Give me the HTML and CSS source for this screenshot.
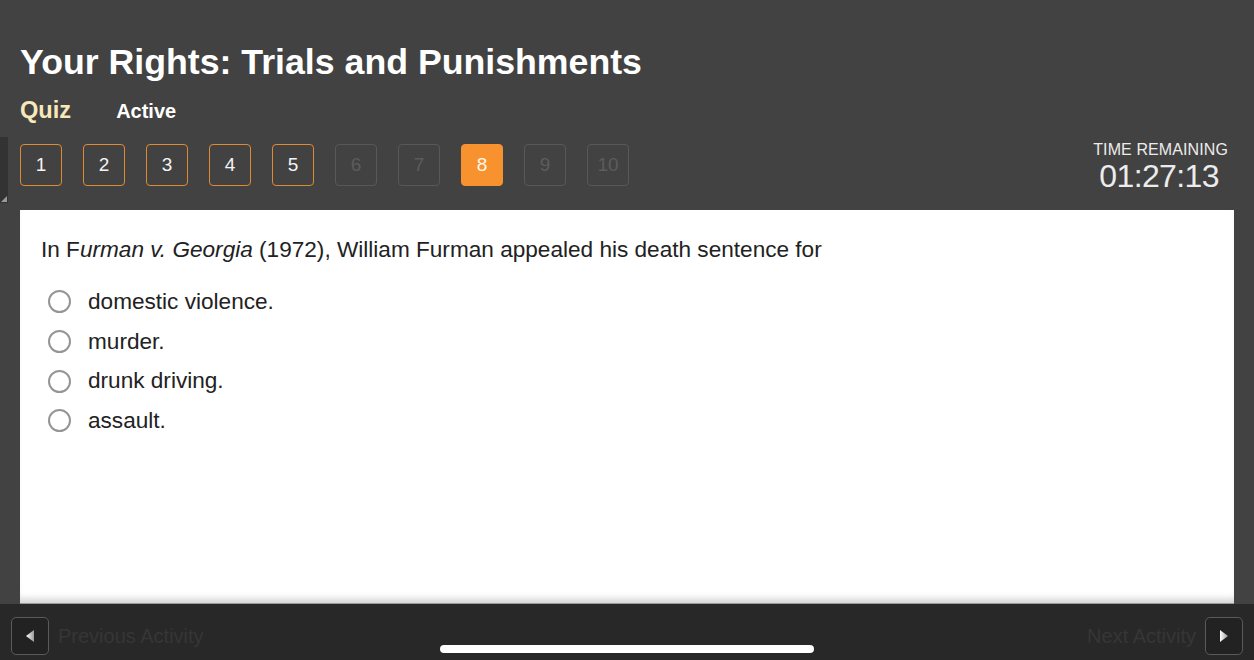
FILE: index.html
```html
<!DOCTYPE html>
<html lang="en">
<head>
<meta charset="utf-8">
<title>Your Rights: Trials and Punishments</title>
<link rel="stylesheet" href="styles.css">
</head>
<body>
<div class="app">
  <header class="header">
    <h1 class="title">Your Rights: Trials and Punishments</h1>
    <div class="subrow">
      <span class="quiz">Quiz</span>
      <span class="status">Active</span>
    </div>
    <div class="navrow">
      <div class="qnums">
        <span class="qn done">1</span>
        <span class="qn done">2</span>
        <span class="qn done">3</span>
        <span class="qn done">4</span>
        <span class="qn done">5</span>
        <span class="qn off">6</span>
        <span class="qn off">7</span>
        <span class="qn cur">8</span>
        <span class="qn off">9</span>
        <span class="qn off">10</span>
      </div>
      <div class="timer">
        <div class="tlabel">TIME REMAINING</div>
        <div class="tval">01:27:13</div>
      </div>
    </div>
    <div class="sidetab"><span class="grip"></span></div>
  </header>
  <main class="panel">
    <p class="question">In F<em>urman v. Georgia</em> (1972), William Furman appealed his death sentence for</p>
    <ul class="options">
      <li class="opt"><span class="radio"></span><span>domestic violence.</span></li>
      <li class="opt"><span class="radio"></span><span>murder.</span></li>
      <li class="opt"><span class="radio"></span><span>drunk driving.</span></li>
      <li class="opt"><span class="radio"></span><span>assault.</span></li>
    </ul>
  </main>
  <footer class="footer">
    <div class="navbtn">
      <span class="arrowbox"><svg width="12" height="14" viewBox="0 0 12 14"><defs><linearGradient id="g1" x1="0" y1="0" x2="1" y2="0"><stop offset="0" stop-color="#ffffff"/><stop offset="1" stop-color="#9a9a9a"/></linearGradient></defs><path d="M2 7 L10 1 L10 13 Z" fill="url(#g1)"/></svg></span>
      <span class="navtext">Previous Activity</span>
    </div>
    <div class="navbtn">
      <span class="navtext">Next Activity</span>
      <span class="arrowbox"><svg width="12" height="14" viewBox="0 0 12 14"><defs><linearGradient id="g2" x1="0" y1="0" x2="1" y2="0"><stop offset="0" stop-color="#ffffff"/><stop offset="1" stop-color="#9a9a9a"/></linearGradient></defs><path d="M2 1 L10 7 L2 13 Z" fill="url(#g2)"/></svg></span>
    </div>
    <div class="homebar"></div>
  </footer>
</div>
</body>
</html>
```

FILE: styles.css
```css
* { box-sizing: border-box; }
html, body {
  margin: 0;
  padding: 0;
}
body {
  width: 1254px;
  height: 660px;
  overflow: hidden;
  background: #424242;
  font-family: "Liberation Sans", Arial, sans-serif;
}
.app {
  display: flex;
  flex-direction: column;
  height: 660px;
}
.header {
  position: relative;
  padding: 42px 26px 0 20px;
}
.title {
  margin: 0;
  font-size: 35.7px;
  line-height: 40px;
  font-weight: bold;
  color: #ffffff;
}
.subrow {
  margin-top: 15px;
  display: flex;
  align-items: baseline;
  gap: 45px;
  height: 26px;
}
.quiz {
  font-size: 23.6px;
  line-height: 26px;
  font-weight: bold;
  color: #f8e7b9;
}
.status {
  font-size: 20px;
  font-weight: bold;
  color: #ffffff;
}
.navrow {
  margin-top: 21px;
  height: 42px;
  display: flex;
  justify-content: space-between;
  align-items: flex-start;
}
.qnums {
  display: flex;
  gap: 21px;
}
.qn {
  width: 42px;
  height: 42px;
  border-radius: 4px;
  border: 1.5px solid #e08a33;
  display: flex;
  align-items: center;
  justify-content: center;
  font-size: 19px;
  color: #f4f4f4;
}
.qn.off {
  border-color: #585858;
  color: #5c5c5c;
}
.qn.cur {
  background: #f7922e;
  border-color: #f7922e;
  color: #fff8ec;
}
.timer {
  margin-top: -3px;
  text-align: right;
  color: #ececec;
}
.tlabel {
  font-size: 16px;
  line-height: 18px;
  letter-spacing: 0.1px;
}
.tval {
  font-size: 32px;
  line-height: 34px;
  letter-spacing: -0.6px;
  margin-right: 9px;
}
.sidetab {
  position: absolute;
  left: 0;
  top: 137px;
  width: 8px;
  height: 66px;
  background: #333333;
}
.grip {
  position: absolute;
  right: 1px;
  bottom: 1px;
  width: 0;
  height: 0;
  border-left: 6px solid transparent;
  border-bottom: 6px solid #9a9a9a;
}
.panel {
  flex: 1;
  margin: 24px 20px 0 20px;
  background: #ffffff;
  padding: 27px 21px 0 21px;
  box-shadow: inset 0 -8px 7px -4px rgba(0,0,0,0.18);
  border-bottom: 1px solid #9a9a9a;
}
.question {
  margin: 0;
  font-size: 22.6px;
  line-height: 26px;
  color: #222222;
}
.question em {
  font-style: italic;
}
.options {
  list-style: none;
  margin: 19px 0 0 0;
  padding: 0;
}
.opt {
  display: flex;
  align-items: center;
  height: 39.7px;
  font-size: 22.6px;
  color: #222222;
  gap: 17px;
  padding-left: 7px;
}
.radio {
  width: 23px;
  height: 23px;
  border-radius: 50%;
  border: 2px solid #959595;
  flex: none;
}
.footer {
  position: relative;
  height: 56px;
  background: #282828;
  display: flex;
  justify-content: space-between;
  align-items: flex-start;
  padding: 13px 11px 0 11px;
}
.navbtn {
  display: flex;
  align-items: center;
  gap: 9px;
}
.arrowbox {
  width: 38px;
  height: 38px;
  border: 1.5px solid #5a5a5a;
  border-radius: 5px;
  background: #222222;
  display: flex;
  align-items: center;
  justify-content: center;
}
.navtext {
  font-size: 20px;
  color: #363636;
}
.homebar {
  position: absolute;
  left: 440px;
  top: 41px;
  width: 374px;
  height: 8px;
  border-radius: 4px;
  background: #ffffff;
}
```
